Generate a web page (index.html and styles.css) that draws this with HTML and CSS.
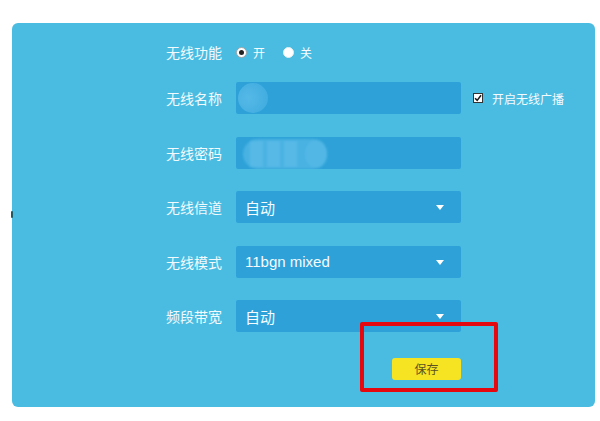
FILE: index.html
```html
<!DOCTYPE html>
<html lang="zh-CN">
<head>
<meta charset="utf-8">
<title>无线设置</title>
<link rel="stylesheet" href="styles.css">
</head>
<body>
<div class="panel">
  <span class="edge-mark"></span>
  <div class="row row-radio">
    <div class="label">无线功能</div>
    <div class="control radios">
      <span class="radio on"></span><span class="rtext">开</span>
      <span class="radio off"></span><span class="rtext">关</span>
    </div>
  </div>
  <div class="row row-name">
    <div class="label">无线名称</div>
    <div class="control field">
      <span class="blob-circle"></span>
    </div>
    <div class="extra">
      <span class="checkbox"><svg viewBox="0 0 10 10" width="8" height="8"><path d="M1.3 5.2 L4 8 L8.8 1.6" fill="none" stroke="#1b1b1b" stroke-width="1.9"/></svg></span>
      <span class="ctext">开启无线广播</span>
    </div>
  </div>
  <div class="row">
    <div class="label">无线密码</div>
    <div class="control field">
      <span class="blob-pill">
        <span class="sq"></span><span class="sq"></span><span class="sq"></span><span class="dot"></span>
      </span>
    </div>
  </div>
  <div class="row">
    <div class="label">无线信道</div>
    <div class="control field select"><span class="value">自动</span><span class="arrow"></span></div>
  </div>
  <div class="row">
    <div class="label">无线模式</div>
    <div class="control field select"><span class="value">11bgn mixed</span><span class="arrow"></span></div>
  </div>
  <div class="row">
    <div class="label">频段带宽</div>
    <div class="control field select"><span class="value">自动</span><span class="arrow"></span></div>
  </div>
  <div class="row row-btn">
    <div class="label"></div>
    <div class="control btnwrap"><button class="save">保存</button></div>
  </div>
  <div class="highlight"></div>
</div>
</body>
</html>
```

FILE: styles.css
```css
html, body {
  margin: 0;
  padding: 0;
  background: #ffffff;
}
body {
  width: 600px;
  height: 421px;
  overflow: hidden;
  font-family: "Liberation Sans", "Noto Sans CJK SC", sans-serif;
}
.panel {
  position: relative;
  margin: 23px 0 0 12px;
  width: 583px;
  height: 384px;
  box-sizing: border-box;
  padding-top: 13px;
  background: #4bbce1;
  border-radius: 6px;
  display: flex;
  flex-direction: column;
}
.edge-mark {
  position: absolute;
  left: -1px;
  top: 188px;
  width: 2px;
  height: 7px;
  background: #1d5a63;
  border-radius: 1px;
}
.row {
  display: grid;
  grid-template-columns: 210px 225px auto;
  column-gap: 14px;
  height: 32px;
  align-items: center;
  margin-top: 22.5px;
}
.row-radio {
  margin-top: 0;
}
.row-name {
  margin-top: 14px;
}
.label {
  text-align: right;
  color: #f2fafd;
  font-family: "Noto Sans CJK SC", sans-serif;
  font-size: 14px;
  line-height: 32px;
}
.radios {
  display: flex;
  align-items: center;
  color: #f7fcfe;
  font-family: "Noto Sans CJK SC", sans-serif;
  font-size: 12px;
}
.radio {
  width: 11px;
  height: 11px;
  box-sizing: border-box;
  border-radius: 50%;
  background: #ffffff;
  border: 1px solid #9aa4a8;
  display: inline-block;
  position: relative;
}
.radio.off {
  margin-left: 18px;
  border-color: #e8eef0;
}
.radio.on::after {
  content: "";
  position: absolute;
  left: 2px;
  top: 2px;
  width: 5px;
  height: 5px;
  border-radius: 50%;
  background: #222222;
}
.rtext {
  margin-left: 6px;
}
.field {
  position: relative;
  height: 32px;
  background: #2ea2d8;
  border-radius: 2px;
  overflow: hidden;
}
.blob-circle {
  position: absolute;
  left: 2px;
  top: 1px;
  width: 30px;
  height: 30px;
  border-radius: 50%;
  background: radial-gradient(circle at 35% 50%, #55b9e6 0%, #47b0e2 60%, #3aa9dd 100%);
  filter: blur(0.6px);
}
.blob-pill {
  position: absolute;
  left: 7px;
  top: 2px;
  width: 84px;
  height: 30px;
  border-radius: 15px;
  background: #49b2e2;
  filter: blur(0.8px);
  display: flex;
  align-items: center;
  padding-left: 7px;
  box-sizing: border-box;
}
.blob-pill .sq {
  width: 13px;
  height: 26px;
  background: #56b9e6;
  margin-right: 4px;
}
.blob-pill .dot {
  margin-left: 4px;
  width: 22px;
  height: 28px;
  border-radius: 50%;
  background: #52b7e5;
}
.extra {
  display: flex;
  align-items: center;
  margin-left: -2px;
}
.checkbox {
  width: 10px;
  height: 10px;
  box-sizing: border-box;
  background: #ffffff;
  border: 1px solid #333333;
  display: inline-flex;
  align-items: center;
  justify-content: center;
}
.ctext {
  margin-left: 9px;
  color: #f4fbfe;
  font-family: "Noto Sans CJK SC", sans-serif;
  font-size: 12px;
}
.select {
  display: flex;
  align-items: center;
  justify-content: space-between;
  padding: 0 17px 0 9px;
  box-sizing: border-box;
}
.value {
  color: #f4fbfe;
  font-size: 15px;
}
.arrow {
  width: 0;
  height: 0;
  border-left: 4px solid transparent;
  border-right: 4px solid transparent;
  border-top: 5px solid #ffffff;
  margin-top: 1px;
}
.row-btn {
  margin-top: 26px;
  height: 22px;
}
.btnwrap {
  display: flex;
  justify-content: flex-end;
}
.save {
  width: 69px;
  height: 22px;
  border: none;
  border-radius: 3px;
  background: #f6e423;
  color: #5b5220;
  font-family: "Noto Sans CJK SC", sans-serif;
  font-size: 12px;
  padding: 0;
  line-height: 22px;
}
.highlight {
  position: absolute;
  left: 348px;
  top: 299px;
  width: 138px;
  height: 70px;
  box-sizing: border-box;
  border: 4px solid #e5080e;
  border-radius: 2px;
}
```
